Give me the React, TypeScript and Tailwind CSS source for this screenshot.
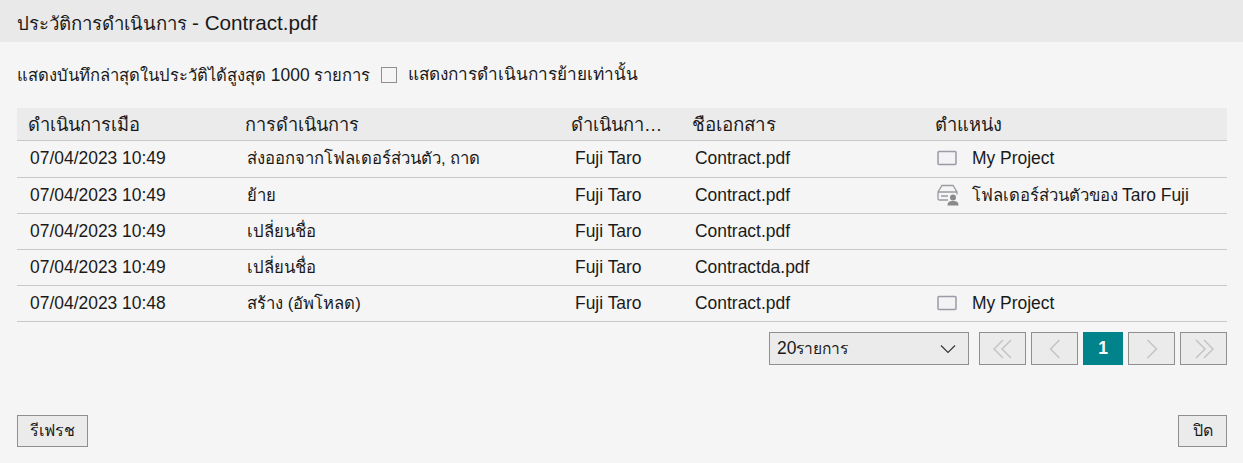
import React from 'react';

const rows = [
  { at: '07/04/2023 10:49', action: 'ส่งออกจากโฟลเดอร์ส่วนตัว, ถาด', by: 'Fuji Taro', doc: 'Contract.pdf', place: 'My Project', icon: 'box' },
  { at: '07/04/2023 10:49', action: 'ย้าย', by: 'Fuji Taro', doc: 'Contract.pdf', place: 'โฟลเดอร์ส่วนตัวของ', suffix: 'Taro Fuji', icon: 'personal' },
  { at: '07/04/2023 10:49', action: 'เปลี่ยนชื่อ', by: 'Fuji Taro', doc: 'Contract.pdf', place: '', icon: '' },
  { at: '07/04/2023 10:49', action: 'เปลี่ยนชื่อ', by: 'Fuji Taro', doc: 'Contractda.pdf', place: '', icon: '' },
  { at: '07/04/2023 10:48', action: 'สร้าง (อัพโหลด)', by: 'Fuji Taro', doc: 'Contract.pdf', place: 'My Project', icon: 'box' },
];

const cols = 'grid grid-cols-[217px_326px_121px_242px_304px]';

function BoxIcon() {
  return (
    <svg width="20" height="16" viewBox="0 0 20 16" fill="none" className="shrink-0">
      <rect x="1" y="1.5" width="18" height="13" rx="1" fill="#f3f3f5" stroke="#9a9aa8" strokeWidth="1.5" />
    </svg>
  );
}

function PersonalIcon() {
  return (
    <svg width="22" height="22" viewBox="0 0 22 22" fill="none" className="-my-1 shrink-0">
      <path d="M11 16 H2.5 Q1 16 1 14.5 V8 L5 1.5 H16 L20 8 V10.5 M1 8 H20 M4 12 H11" stroke="#9a9aa0" strokeWidth="1.3" />
      <circle cx="16" cy="13.5" r="3" fill="#8a8a8a" />
      <path d="M10.5 21.5 C10.5 17.8 12.5 17 16 17 S21.5 17.8 21.5 21.5 Z" fill="#8a8a8a" />
    </svg>
  );
}

function PagerButton({ d }: { d: string }) {
  return (
    <button className="flex h-[33px] w-[47px] items-center justify-center border border-[#8f8f8f] bg-[#ebebeb]">
      <svg width="20" height="20" viewBox="0 0 20 20" fill="none">
        <path d={d} stroke="#c4c4c4" strokeWidth="1.5" />
      </svg>
    </button>
  );
}

export default function App() {
  return (
    <div className="flex h-[463px] w-[1243px] flex-col bg-[#f5f5f5] font-['Liberation_Sans','Noto_Sans',sans-serif] text-[17.45px] text-[#1a1a1a]">
      <div className="flex h-[42px] items-baseline bg-[#e9e9e9] pl-[17px] pt-[7px] text-[18.6px]">
        <span>ประวัติการดำเนินการ</span>
        <span className="ml-[5px] text-[20.7px]">- Contract.pdf</span>
      </div>

      <div className="flex h-[66px] items-center pl-[17px] pr-[16px]">
        <span>
          <span className="text-[16.6px]">แสดงบันทึกล่าสุดในประวัติได้สูงสุด</span> 1000 <span className="text-[16.6px]">รายการ</span>
        </span>
        <span className="mx-[11px] block h-[16px] w-[16px] border border-[#8f8f8f] bg-[#f5f5f5]" />
        <span className="text-[17.2px]">แสดงการดำเนินการย้ายเท่านั้น</span>
      </div>

      <div className="ml-[17px] mr-[16px]">
        <div className={`${cols} h-[33px] items-baseline border-b border-[#c8c8c8] bg-[#ebebeb] pt-[3px] text-[18.3px]`}>
          <div className="pl-[11px]">ดำเนินการเมือ</div>
          <div className="pl-[11px] text-[18.2px]">การดำเนินการ</div>
          <div className="truncate pl-[11px] pr-[14px]">ดำเนินการโดย</div>
          <div className="pl-[11px] text-[18.8px]">ชือเอกสาร</div>
          <div className="pl-[12px]">ตำแหน่ง</div>
        </div>
        {rows.map((r, i) => (
          <div key={i} className={`${cols} ${i === 0 ? 'h-[37px] pb-px' : 'h-[36px]'} items-center border-b border-[#c8c8c8]`}>
            <div className="pl-[13px]">{r.at}</div>
            <div className="pl-[13px] text-[16.7px]">{r.action}</div>
            <div className="pl-[15px]">{r.by}</div>
            <div className="pl-[14px]">{r.doc}</div>
            <div className="flex items-center pl-[14px]">
              {r.icon === 'box' && <span className="mr-[15px]"><BoxIcon /></span>}
              {r.icon === 'personal' && <span className="mr-[13px]"><PersonalIcon /></span>}
              <span className={r.suffix ? 'text-[16.7px]' : ''}>{r.place}</span>
              {r.suffix && <span className="ml-[4px]">{r.suffix}</span>}
            </div>
          </div>
        ))}

        <div className="mt-[10px] flex justify-end">
          <button className="mr-[10px] flex h-[33px] w-[200px] items-center justify-between border border-[#8f8f8f] bg-[#ebebeb] pl-[7px] pr-[12px]">
            <span>20<span className="text-[15.6px]">รายการ</span></span>
            <svg width="16" height="10" viewBox="0 0 16 10" fill="none">
              <path d="M1 1.5 L8 8.5 L15 1.5" stroke="#333" strokeWidth="1.1" />
            </svg>
          </button>
          <div className="flex gap-[5px]">
            <PagerButton d="M10 1 L1 10 L10 19 M18 1 L9 10 L18 19" />
            <PagerButton d="M14.5 1 L5.5 10 L14.5 19" />
            <button className="h-[33px] w-[40px] bg-[#00838a] font-bold text-white">1</button>
            <PagerButton d="M5.5 1 L14.5 10 L5.5 19" />
            <PagerButton d="M2 1 L11 10 L2 19 M10 1 L19 10 L10 19" />
          </div>
        </div>
      </div>

      <div className="mt-auto mb-[16px] flex justify-between pl-[17px] pr-[16px] text-[16px]">
        <button className="h-[32px] w-[71px] border border-[#8f8f8f] bg-[#ebebeb]">รีเฟรช</button>
        <button className="h-[32px] w-[49px] border border-[#8f8f8f] bg-[#ebebeb]">ปิด</button>
      </div>
    </div>
  );
}
